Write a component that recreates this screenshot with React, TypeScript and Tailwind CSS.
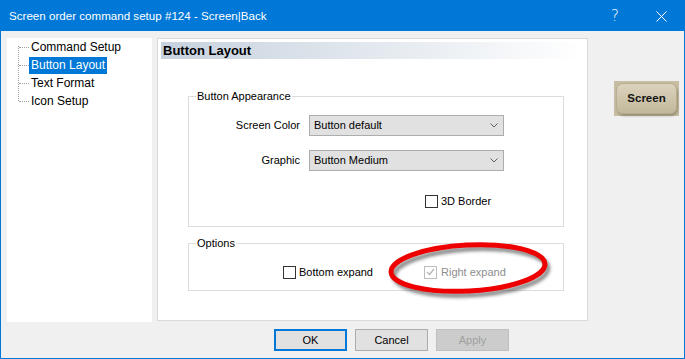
import React from "react";

const Checkbox: React.FC<{ checked?: boolean; disabled?: boolean }> = ({ checked, disabled }) => (
  <span
    className={`w-[13px] h-[13px] border flex items-center justify-center shrink-0 ${
      disabled ? "border-[#bcbcbc] bg-white" : "border-[#333333] bg-white"
    }`}
  >
    {checked && (
      <svg width="9" height="8" viewBox="0 0 9 8">
        <path d="M1 4 L3.5 6.5 L8 1" fill="none" stroke={disabled ? "#b5b5b5" : "#333"} strokeWidth="1.3" />
      </svg>
    )}
  </span>
);

const Select: React.FC<{ value: string }> = ({ value }) => (
  <div className="w-[195px] h-[21px] bg-[#e1e1e1] border border-[#adadad] flex items-center justify-between pl-[4px] pr-[5px] text-[11px] text-black">
    <span>{value}</span>
    <svg width="8" height="5" viewBox="0 0 8 5">
      <path d="M0.5 0.5 L4 4 L7.5 0.5" fill="none" stroke="#606060" strokeWidth="1" />
    </svg>
  </div>
);

const TreeItem: React.FC<{ label: string; selected?: boolean }> = ({ label, selected }) => (
  <div className="flex items-center h-[18px]">
    <span className="w-[10px] border-t border-dotted border-[#a0a0a0]" />
    <span
      className={`px-[2px] leading-[17px] h-[17px] ${selected ? "bg-[#0078d7] text-white" : "text-black"}`}
    >
      {label}
    </span>
  </div>
);

const App: React.FC = () => {
  return (
    <div className="w-[685px] h-[359px] bg-[#f0f0f0] border border-[#0078d7] flex flex-col font-['Liberation_Sans',Arial,sans-serif] relative overflow-hidden">
      {/* title bar */}
      <div className="h-[30px] bg-[#0078d7] flex items-center pl-[8px] text-white text-[11.6px] shrink-0">
        <span className="flex-1">Screen order command setup #124 - Screen|Back</span>
        <span className="text-[15px] w-[14px] mr-[31px] font-['DejaVu_Sans',sans-serif] font-light">?</span>
        <svg width="11" height="11" viewBox="0 0 11 11" className="mr-[17px]">
          <path d="M0.5 0.5 L10.5 10.5 M10.5 0.5 L0.5 10.5" stroke="white" strokeWidth="1" />
        </svg>
      </div>

      {/* body */}
      <div className="flex pt-[7px] shrink-0">
        {/* tree */}
        <div className="ml-[6px] w-[145px] h-[284px] bg-white pl-[11px] text-[12px]">
          <div className="flex">
            <div className="w-0 border-l border-dotted border-[#a0a0a0] mt-[8px] h-[55px]" />
            <div className="flex flex-col">
              <TreeItem label="Command Setup" />
              <TreeItem label="Button Layout" selected />
              <TreeItem label="Text Format" />
              <TreeItem label="Icon Setup" />
            </div>
          </div>
        </div>

        {/* page */}
        <div className="ml-[5px] w-[431px] h-[283px] bg-white border border-[#dadada] flex flex-col">
          <div className="mt-[3px] mx-[3px] h-[17px] bg-gradient-to-r from-[#c7d2de] to-white pl-[2px] text-[13px] font-bold leading-[17px] text-black">
            Button Layout
          </div>

          <fieldset className="ml-[30px] mt-[31px] w-[376px] h-[137px] border border-[#dcdcdc] text-[11px] text-black">
            <legend className="ml-[7px] px-[1px] leading-[13px]">Button Appearance</legend>
            <div className="flex items-center mt-[12px]">
              <span className="w-[111px] text-right">Screen Color</span>
              <span className="ml-[9px]">
                <Select value="Button default" />
              </span>
            </div>
            <div className="flex items-center mt-[14px]">
              <span className="w-[111px] text-right">Graphic</span>
              <span className="ml-[9px]">
                <Select value="Button Medium" />
              </span>
            </div>
            <div className="flex items-center mt-[22px] pl-[236px] gap-[3px]">
              <Checkbox />
              <span>3D Border</span>
            </div>
          </fieldset>

          <fieldset className="ml-[30px] mt-[10px] w-[376px] h-[54px] border border-[#dcdcdc] text-[11px] text-black">
            <legend className="ml-[7px] px-[1px] leading-[13px]">Options</legend>
            <div className="flex items-center mt-[14px] pl-[94px]">
              <div className="w-[141px] flex items-center gap-[3px]">
                <Checkbox />
                <span>Bottom expand</span>
              </div>
              <div className="flex items-center gap-[4px] text-[#8d8d8d]">
                <Checkbox checked disabled />
                <span>Right expand</span>
              </div>
            </div>
          </fieldset>
        </div>

        {/* preview */}
        <div className="flex-1 pl-[26px] pt-[43px]">
          <div className="w-[65px] h-[35px] bg-[#c6bda3] flex items-center justify-center">
            <div className="w-[61px] h-[31px] rounded-[7px] bg-gradient-to-b from-[#dbd3bc] to-[#c2b89c] border border-[#b8ad90] shadow-[1px_2px_2px_rgba(110,100,70,0.5)] flex items-center justify-center text-[11.5px] font-bold text-[#141414]">
              Screen
            </div>
          </div>
        </div>
      </div>

      {/* footer */}
      <div className="flex pl-[273px] pt-[7px] gap-[8px] text-[11px]">
        <button className="w-[73px] h-[22px] bg-[#e1e1e1] border-2 border-[#0078d7] text-black">OK</button>
        <button className="w-[73px] h-[22px] bg-[#e1e1e1] border border-[#adadad] text-black">Cancel</button>
        <button className="w-[73px] h-[22px] bg-[#cccccc] border border-[#bfbfbf] text-[#a0a0a0]">Apply</button>
      </div>

      {/* red highlight ellipse */}
      <svg className="absolute left-[379px] top-[235px] pointer-events-none" width="185" height="70" viewBox="0 0 185 70">
        <defs>
          <filter id="sh" x="-20%" y="-40%" width="140%" height="180%">
            <feGaussianBlur stdDeviation="1.6" />
          </filter>
        </defs>
        <ellipse cx="91" cy="36" rx="77" ry="23" transform="rotate(-3 91 36)" fill="none" stroke="rgba(60,60,60,0.55)" strokeWidth="5" filter="url(#sh)" />
        <ellipse cx="88" cy="32" rx="77" ry="23" transform="rotate(-3 88 32)" fill="none" stroke="#ee0000" strokeWidth="5" />
      </svg>
    </div>
  );
};

export default App;
